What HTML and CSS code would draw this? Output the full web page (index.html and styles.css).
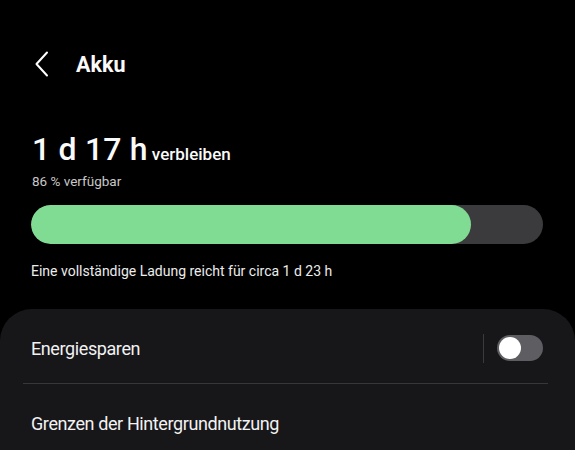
FILE: index.html
```html
<!DOCTYPE html>
<html lang="de">
<head>
<meta charset="utf-8">
<link rel="stylesheet" href="styles.css">
</head>
<body>
<div class="screen">
  <header class="topbar">
    <svg class="back" width="16" height="26" viewBox="0 0 16 26"><path d="M13 1.5 L2.5 13 L13 24.5" fill="none" stroke="#fff" stroke-width="2" stroke-linecap="round" stroke-linejoin="round"/></svg>
    <h1 class="title">Akku</h1>
  </header>
  <section class="summary">
    <div class="remain"><span class="big">1 d 17 h</span><span class="suffix">verbleiben</span></div>
    <div class="avail">86 % verfügbar</div>
    <div class="bar"><div class="fill" style="width:86%"></div></div>
    <div class="full">Eine vollständige Ladung reicht für circa 1 d 23 h</div>
  </section>
  <section class="card">
    <div class="row">
      <span class="label">Energiesparen</span>
      <div class="ctrl">
        <span class="vdiv"></span>
        <span class="toggle"><span class="knob"></span></span>
      </div>
    </div>
    <div class="sep"></div>
    <div class="row">
      <span class="label">Grenzen der Hintergrundnutzung</span>
    </div>
  </section>
</div>
</body>
</html>
```
FILE: styles.css
```css
* { box-sizing: border-box; margin: 0; padding: 0; }
html, body { background: #000; }
body { width: 575px; height: 450px; overflow: hidden; font-family: Roboto, "Noto Sans", sans-serif; color: #fafafa; }
.screen { display: flex; flex-direction: column; }
.topbar { display: flex; align-items: center; height: 66px; margin-top: 31px; padding-left: 34px; }
.back { margin-right: 26px; }
.title { font-size: 21.5px; font-weight: 700; letter-spacing: 0; }
.summary { padding: 33px 32px 0 31px; }
.remain { display: flex; align-items: baseline; }
.big { font-size: 32px; font-weight: 500; letter-spacing: 0.2px; line-height: 38px; margin-left: 1px; }
.suffix { font-size: 17px; font-weight: 500; margin-left: 4px; }
.avail { font-size: 13.5px; color: #c8c8c8; margin-top: 5px; margin-left: 1px; }
.bar { margin-top: 16px; height: 39px; border-radius: 20px; background: #3b3b3d; overflow: hidden; }
.fill { height: 100%; background: #80dc93; border-radius: 20px; }
.full { font-size: 14px; color: #ececec; margin-top: 19px; }
.card { margin-top: 30px; background: #17171a; border-radius: 32px 32px 0 0; padding: 0 32px 0 23px; flex: 1; }
.row { display: flex; align-items: center; justify-content: space-between; height: 74px; padding: 4px 0 0 8px; }
.label { font-size: 18px; letter-spacing: -0.4px; color: #f2f2f2; }
.ctrl { display: flex; align-items: center; gap: 13px; }
.vdiv { width: 1px; height: 29px; background: #3a3a3c; }
.toggle { width: 46px; height: 26px; border-radius: 13px; background: #5e5e62; display: flex; align-items: center; padding-left: 2px; }
.knob { width: 22px; height: 22px; border-radius: 50%; background: #fff; }
.sep { height: 1px; background: #37373a; margin-left: 0; margin-right: -5px; }
```
